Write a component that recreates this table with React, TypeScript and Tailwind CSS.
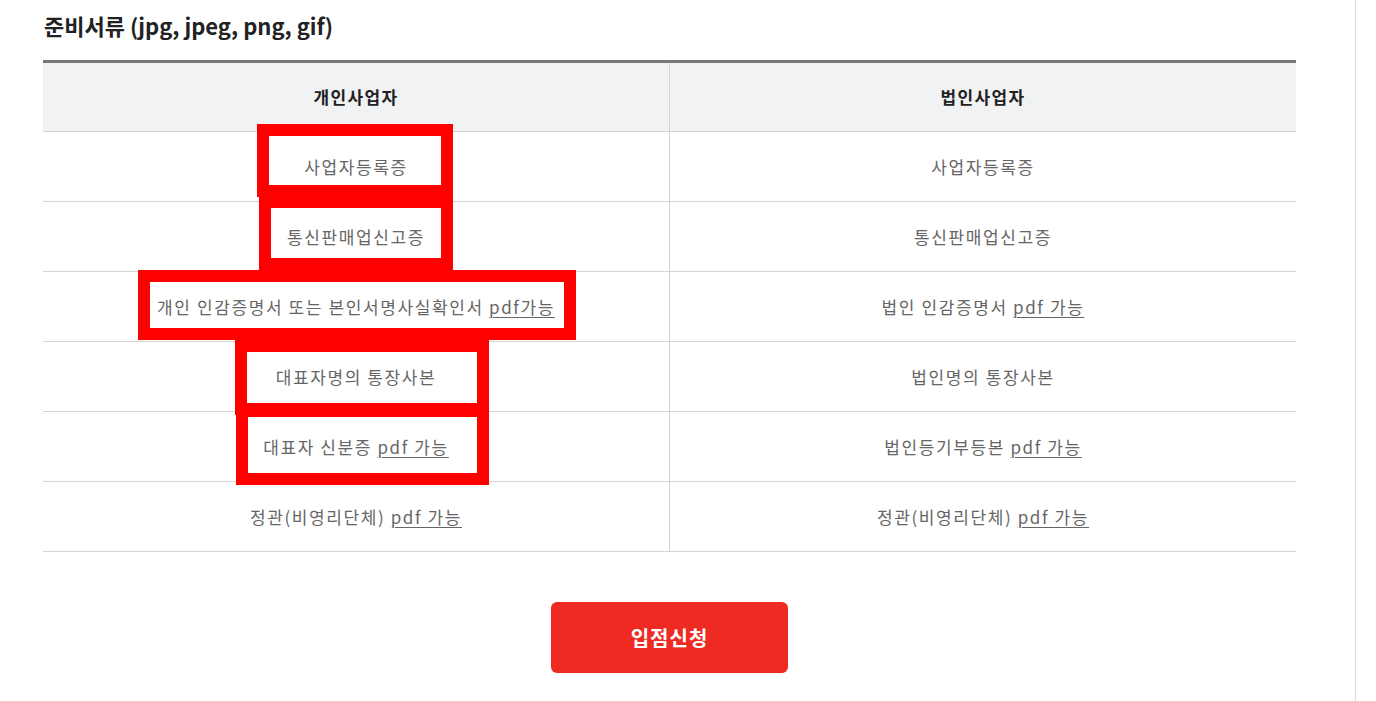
import React from "react";

const font = { fontFamily: '"Noto Sans CJK KR", "Noto Sans", sans-serif' };

function Pdf({ text }: { text: string }) {
  return <span className="underline underline-offset-[3px] decoration-1">{text}</span>;
}

const rows: [React.ReactNode, React.ReactNode][] = [
  ["사업자등록증", "사업자등록증"],
  ["통신판매업신고증", "통신판매업신고증"],
  [
    <>개인 인감증명서 또는 본인서명사실확인서 <Pdf text="pdf가능" /></>,
    <>법인 인감증명서 <Pdf text="pdf 가능" /></>,
  ],
  ["대표자명의 통장사본", "법인명의 통장사본"],
  [<>대표자 신분증 <Pdf text="pdf 가능" /></>, <>법인등기부등본 <Pdf text="pdf 가능" /></>],
  [<>정관(비영리단체) <Pdf text="pdf 가능" /></>, <>정관(비영리단체) <Pdf text="pdf 가능" /></>],
];

const boxes = [
  { l: 257, t: 124, w: 196, h: 73 },
  { l: 259, t: 196, w: 194, h: 74 },
  { l: 138, t: 270, w: 438, h: 70 },
  { l: 235, t: 340, w: 254, h: 75 },
  { l: 236, t: 405, w: 253, h: 80 },
];

export default function App() {
  return (
    <div className="relative w-[1376px] h-[701px] bg-white overflow-hidden" style={font}>
      <div className="flex h-full">
        <div className="w-[1356px] border-r border-[#dcdcdc] pl-[43px]">
          <div className="w-[1253px]">
            <h2 className="pt-[10px] h-[30px] leading-[30px] text-[22px] font-bold text-[#222] pl-[1px] box-content">
              준비서류 (jpg, jpeg, png, gif)
            </h2>
            <div className="mt-[20px] border-t-[3px] border-[#777]">
              <div className="grid grid-cols-[627px_626px] h-[69px] bg-[#f1f2f4] border-b border-[#d4d4d4] text-[17px] font-bold text-[#222] tracking-[1.4px]">
                <div className="flex items-center justify-center border-r border-[#d4d4d4]">개인사업자</div>
                <div className="flex items-center justify-center">법인사업자</div>
              </div>
              {rows.map((r, i) => (
                <div
                  key={i}
                  className="grid grid-cols-[627px_626px] h-[70px] border-b border-[#d4d4d4] text-[17px] text-[#666] tracking-[1.6px]"
                >
                  <div className="flex items-center justify-center border-r border-[#d4d4d4]">
                    <span>{r[0]}</span>
                  </div>
                  <div className="flex items-center justify-center">
                    <span>{r[1]}</span>
                  </div>
                </div>
              ))}
            </div>
            <div className="flex justify-center mt-[50px]">
              <button className="w-[237px] h-[71px] rounded-[6px] bg-[#ef2a23] text-white text-[20px] font-bold tracking-[1px]">
                입점신청
              </button>
            </div>
          </div>
        </div>
      </div>
      {boxes.map((b, i) => (
        <div
          key={i}
          className="absolute border-[12px] border-[#ff0000] pointer-events-none"
          style={{ left: b.l, top: b.t, width: b.w, height: b.h }}
        />
      ))}
    </div>
  );
}
